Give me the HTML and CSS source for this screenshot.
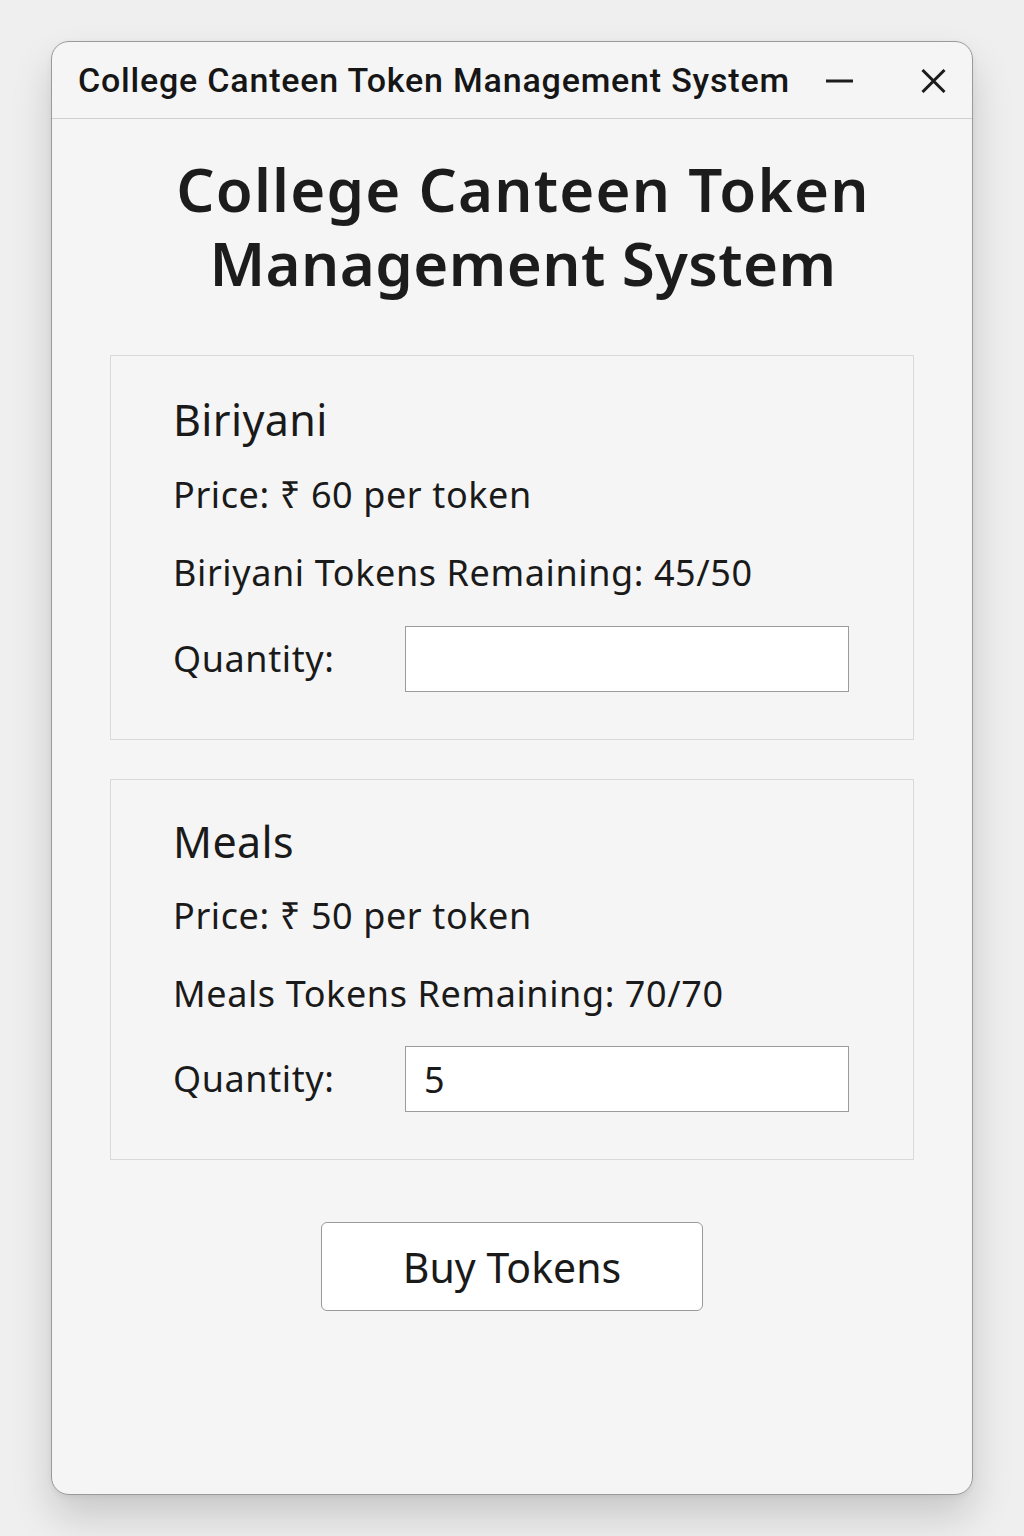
FILE: index.html
```html
<!DOCTYPE html>
<html lang="en">
<head>
<meta charset="utf-8">
<title>College Canteen Token Management System</title>
<link rel="stylesheet" href="styles.css">
</head>
<body>
<div class="window">
  <div class="titlebar">
    <span class="titlebar-text">College Canteen Token Management System</span>
    <div class="titlebar-controls">
      <svg class="ctrl ctrl-min" width="27" height="24" viewBox="0 0 27 24"><line x1="0" y1="12" x2="27" y2="12" stroke="#1c1c1c" stroke-width="3"/></svg>
      <svg class="ctrl ctrl-close" width="25" height="24" viewBox="0 0 25 24"><path d="M1.5 1 L23.5 23 M23.5 1 L1.5 23" stroke="#1c1c1c" stroke-width="3" fill="none"/></svg>
    </div>
  </div>
  <main class="content">
    <h1 class="heading"><span class="heading-line">College Canteen Token</span><span class="heading-line">Management System</span></h1>
    <section class="card">
      <h2 class="card-title">Biriyani</h2>
      <p class="card-line line-price">Price: ₹ 60 per token</p>
      <p class="card-line line-remaining">Biriyani Tokens Remaining: 45/50</p>
      <div class="qty-row">
        <label class="qty-label">Quantity:</label>
        <input class="qty-input" type="text" value="">
      </div>
    </section>
    <section class="card card-compact">
      <h2 class="card-title">Meals</h2>
      <p class="card-line line-price">Price: ₹ 50 per token</p>
      <p class="card-line line-remaining">Meals Tokens Remaining: 70/70</p>
      <div class="qty-row">
        <label class="qty-label">Quantity:</label>
        <input class="qty-input" type="text" value="5">
      </div>
    </section>
    <div class="actions">
      <button class="buy-btn" type="button">Buy Tokens</button>
    </div>
  </main>
</div>
</body>
</html>
```

FILE: styles.css
```css
* { box-sizing: border-box; }

html, body {
  margin: 0;
  padding: 0;
}

body {
  background: #efefef;
  font-family: "Noto Sans", "Open Sans", "DejaVu Sans", sans-serif;
  color: #1a1a1a;
  padding: 41px 0 0 51px;
  height: 1536px;
}

.window {
  width: 922px;
  height: 1454px;
  background: #f5f5f5;
  border: 1px solid #9a9a9a;
  border-radius: 18px;
  box-shadow: 0 22px 40px rgba(0, 0, 0, 0.16), 0 2px 6px rgba(0, 0, 0, 0.06);
  overflow: hidden;
}

.titlebar {
  height: 77px;
  border-bottom: 1px solid #cfcfcf;
  display: flex;
  align-items: center;
  justify-content: space-between;
  padding: 0 26px 0 26px;
}

.titlebar-text {
  font-family: "Roboto", "Liberation Sans", sans-serif;
  font-size: 34px;
  font-weight: 500;
  color: #161616;
  letter-spacing: 0.8px;
}

.titlebar-controls {
  display: flex;
  align-items: center;
  gap: 68px;
  margin-top: 1px;
}

.ctrl { display: block; }

.content {
  display: flex;
  flex-direction: column;
  align-items: stretch;
  padding: 33px 58px 0 58px;
}

.heading {
  margin: 0 0 55px 0;
  padding-left: 22px;
  display: flex;
  flex-direction: column;
  align-items: center;
  font-size: 60px;
  font-weight: 600;
  color: #1c1c1c;
  letter-spacing: 0.4px;
}

.heading-line {
  display: block;
  height: 74px;
  line-height: 74px;
}

.heading-line:first-child {
  letter-spacing: 1.2px;
}

.card {
  border: 1px solid #d9d9d9;
  background: #f5f5f5;
  padding: 39px 40px 47px 62px;
  margin-bottom: 39px;
}

.card-title {
  margin: 0;
  font-size: 43px;
  line-height: 50px;
  font-weight: 400;
  color: #1a1a1a;
  letter-spacing: 0.4px;
}

.card-line {
  margin: 0;
  font-size: 36px;
  line-height: 50px;
  color: #1a1a1a;
  letter-spacing: 0.6px;
}

.line-price { margin-top: 25px; }
.line-remaining { margin-top: 28px; }

.qty-row {
  margin-top: 28px;
  display: flex;
  align-items: center;
}

.card-compact { padding-top: 37px; }
.card-compact .line-price { margin-top: 24px; }
.card-compact .qty-row { margin-top: 27px; }

.qty-label {
  width: 232px;
  font-size: 36px;
  line-height: 50px;
  letter-spacing: 0.6px;
}

.qty-input {
  width: 444px;
  height: 66px;
  border: 1px solid #9c9c9c;
  background: #ffffff;
  padding: 0 18px;
  font-family: inherit;
  font-size: 36px;
  color: #1a1a1a;
  outline: none;
  border-radius: 0;
}

.actions {
  display: flex;
  justify-content: center;
  margin-top: 23px;
}

.buy-btn {
  width: 382px;
  height: 89px;
  background: #ffffff;
  border: 1px solid #9a9a9a;
  border-radius: 6px;
  font-family: inherit;
  font-size: 41px;
  color: #1a1a1a;
  padding: 0;
}
```
